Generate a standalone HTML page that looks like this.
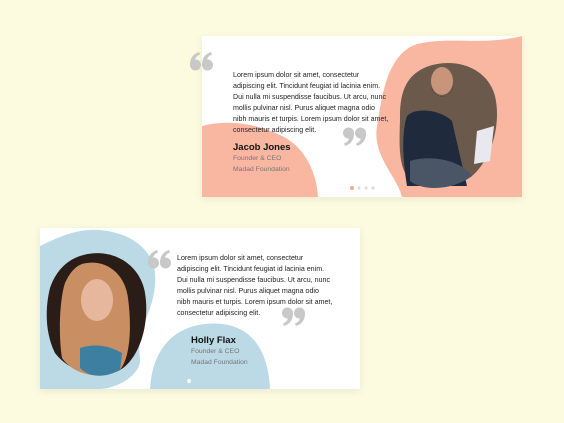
<!DOCTYPE html>
<html><head><style>
*{margin:0;padding:0;box-sizing:border-box}
body{width:564px;height:423px;background:#fcfbdf;position:relative;overflow:hidden;font-family:"Liberation Sans",sans-serif}
.card{position:absolute;background:#fff;box-shadow:0 2px 8px rgba(0,0,0,.08);overflow:hidden}
.t{position:absolute;font-size:7.1px;line-height:11px;color:#222;white-space:nowrap}
.n{position:absolute;font-size:9.5px;font-weight:bold;color:#111}
.s{position:absolute;font-size:6.8px;line-height:11px;color:#777}
.q{position:absolute}
</style></head><body>
<svg width="0" height="0" style="position:absolute"><defs>
<g id="oq" fill="#c8c8c8"><circle cx="5.5" cy="13" r="5.5"/><path d="M0 13 C0 6 3 2 9 0 L10 2.5 C6 4 4.5 7 5 10Z"/><circle cx="17.5" cy="13" r="5.5"/><path d="M12 13 C12 6 15 2 21 0 L22 2.5 C18 4 16.5 7 17 10Z"/></g>
<g id="cq" fill="#c8c8c8"><circle cx="5.5" cy="6" r="5.5"/><path d="M11 6 C11 13 8 17 2 19 L1 16.5 C5 15 6.5 12 6 9Z"/><circle cx="17.5" cy="6" r="5.5"/><path d="M23 6 C23 13 20 17 14 19 L13 16.5 C17 15 18.5 12 18 9Z"/></g>
</defs></svg>
<div class="card" style="left:202px;top:36px;width:320px;height:161px">
<svg width="320" height="161" style="position:absolute;left:0;top:0">
<path d="M0 90 C30 82 60 90 80 100 C105 112 115 140 116 161 L0 161Z" fill="#f9b7a1"/>
<path d="M215 8 C250 0 280 10 320 0 L320 161 L200 161 C195 140 170 120 175 90 C180 60 185 18 215 8Z" fill="#f9b7a1"/>
<path d="M222 32 C250 20 285 30 293 60 C300 90 288 125 270 140 C250 155 220 155 205 140 C195 125 198 100 198 80 C198 55 205 40 222 32Z" fill="#6b5a4c"/>
<path d="M205 80 C215 70 240 75 250 85 L265 150 L205 150 C200 120 200 95 205 80Z" fill="#1f2a3d"/>
<path d="M208 125 C230 118 260 125 270 140 C250 155 220 155 208 145Z" fill="#4a5566"/>
<ellipse cx="240" cy="45" rx="11" ry="14" fill="#c9957a"/>
<path d="M229 50 C232 64 248 64 251 50 L248 57 C242 62 238 62 232 57Z" fill="#3a2a20"/>
<path d="M275 95 L292 90 L288 125 L272 128Z" fill="#e8e8ee"/>
<circle cx="150" cy="152" r="2" fill="#f7a88f"/><circle cx="157" cy="152" r="1.6" fill="#ddd"/><circle cx="164" cy="152" r="1.6" fill="#ddd"/><circle cx="171" cy="152" r="1.6" fill="#ddd"/>
<use href="#cq" transform="translate(141 91)"/>
</svg>
<div class="t" style="left:31px;top:34px">Lorem ipsum dolor sit amet, consectetur<br>adipiscing elit. Tincidunt feugiat id lacinia enim.<br>Dui nulla mi suspendisse faucibus. Ut arcu, nunc<br>mollis pulvinar nisl. Purus aliquet magna odio<br>nibh mauris et turpis. Lorem ipsum dolor sit amet,<br>consectetur adipiscing elit.</div>
<div class="n" style="left:31px;top:106px">Jacob Jones</div>
<div class="s" style="left:31px;top:117px">Founder &amp; CEO<br>Madad Foundation</div>
</div>
<svg class="q" width="24" height="20" style="left:190px;top:51px"><use href="#oq" transform="translate(0 1)"/></svg>
<div class="card" style="left:40px;top:228px;width:320px;height:161px">
<svg width="320" height="161" style="position:absolute;left:0;top:0">
<path d="M0 18 C20 8 40 0 60 2 C90 5 112 20 115 45 C118 80 95 100 100 130 C102 145 80 160 60 161 L0 161Z" fill="#bcd9e6"/>
<path d="M110 161 C112 125 130 100 165 96 C205 92 228 115 230 161Z" fill="#bcd9e6"/>
<path d="M40 28 C70 18 100 35 105 65 C110 95 100 130 80 142 C60 152 30 145 15 125 C5 105 5 80 10 60 C15 45 25 33 40 28Z" fill="#2a1d18"/>
<path d="M42 36 C65 30 85 45 88 70 C92 100 90 130 80 142 C60 152 35 148 22 130 C18 105 20 70 25 55 C30 44 36 38 42 36Z" fill="#c98f62"/>
<ellipse cx="57" cy="72" rx="16" ry="21" fill="#e6b79c"/>
<path d="M40 120 C55 115 70 118 82 125 L80 142 C65 150 50 150 40 140Z" fill="#3d7fa0"/>
<circle cx="149" cy="153" r="2" fill="#fff"/>
<use href="#oq" transform="translate(108 22)"/>
<use href="#cq" transform="translate(242 79)"/>
</svg>
<div class="t" style="left:137px;top:25px">Lorem ipsum dolor sit amet, consectetur<br>adipiscing elit. Tincidunt feugiat id lacinia enim.<br>Dui nulla mi suspendisse faucibus. Ut arcu, nunc<br>mollis pulvinar nisl. Purus aliquet magna odio<br>nibh mauris et turpis. Lorem ipsum dolor sit amet,<br>consectetur adipiscing elit.</div>
<div class="n" style="left:151px;top:107px">Holly Flax</div>
<div class="s" style="left:151px;top:118px">Founder &amp; CEO<br>Madad Foundation</div>
</div>
</body></html>
